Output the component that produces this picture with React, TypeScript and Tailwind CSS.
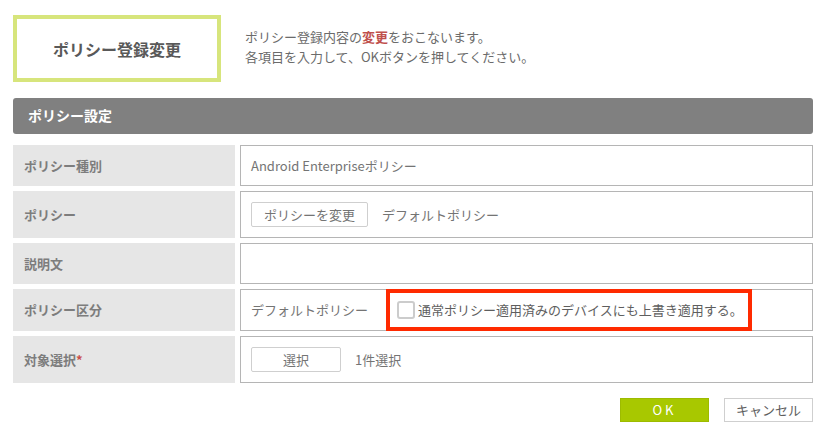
const labelCls =
  'w-[222px] shrink-0 bg-[#e6e6e6] flex items-center pl-[11px] text-[13px] font-bold text-[#7d7d7d]';
const valueCls =
  'flex-1 border border-[#b5b5b5] bg-white flex items-center pl-[10px] text-[13px] text-[#747474]';
const smallBtn =
  'h-[25px] border border-[#cfcfcf] rounded-[2px] bg-white text-[13px] text-[#747474] flex items-center justify-center';

export default function App() {
  return (
    <div className="w-[826px] h-[440px] bg-white px-[13px] pt-[15px] font-['Meiryo','Noto_Sans_CJK_JP',sans-serif]">
      <div className="flex items-center">
        <div className="w-[208px] h-[67px] border-4 border-[#d7e57c] flex items-center justify-center text-[16px] font-bold text-[#595959]">
          ポリシー登録変更
        </div>
        <div className="ml-[24px] mb-[4px] text-[13px] leading-[20px] text-[#6b6b6b]">
          <p>
            ポリシー登録内容の<span className="text-[#c0504d] font-bold">変更</span>をおこないます。
          </p>
          <p>各項目を入力して、OKボタンを押してください。</p>
        </div>
      </div>

      <div className="mt-[16px] h-[36px] bg-[#808080] rounded-[3px] flex items-center pl-[15px] pb-[2px] text-[14px] font-bold text-white">
        ポリシー設定
      </div>

      <div className="mt-[11px] flex flex-col gap-[5px]">
        <div className="flex gap-[5px] h-[41px]">
          <div className={labelCls}>ポリシー種別</div>
          <div className={valueCls}>Android Enterpriseポリシー</div>
        </div>

        <div className="flex gap-[5px] h-[47px]">
          <div className={labelCls}>ポリシー</div>
          <div className={valueCls}>
            <button className={`${smallBtn} w-[117px]`}>ポリシーを変更</button>
            <span className="ml-[14px]">デフォルトポリシー</span>
          </div>
        </div>

        <div className="flex gap-[5px] h-[41px]">
          <div className={labelCls}>説明文</div>
          <div className={valueCls}></div>
        </div>

        <div className="flex gap-[5px] h-[42px]">
          <div className={labelCls}>ポリシー区分</div>
          <div className={`${valueCls} items-stretch`}>
            <span className="flex items-center">デフォルトポリシー</span>
            <label className="ml-[18px] -my-px w-[366px] border-4 border-[#ff2a00] flex items-center pl-[7px] gap-[3px] text-[#5e5e5e]">
              <span className="w-[18px] h-[18px] border-2 border-[#cccccc] rounded-[3px] bg-white" />
              通常ポリシー適用済みのデバイスにも上書き適用する。
            </label>
          </div>
        </div>

        <div className="flex gap-[5px] h-[47px]">
          <div className={labelCls}>
            対象選択<span className="text-[#c9504a]">*</span>
          </div>
          <div className={valueCls}>
            <button className={`${smallBtn} w-[90px]`}>選択</button>
            <span className="ml-[14px]">1件選択</span>
          </div>
        </div>
      </div>

      <div className="mt-[15px] flex justify-end gap-[15px]">
        <button className="w-[89px] h-[24px] bg-[#a8c800] border border-[#9dbb00] text-white text-[13px] tracking-[3px] flex items-center justify-center">
          OK
        </button>
        <button className="w-[89px] h-[24px] bg-white border border-[#cfcfcf] text-[#5e5e5e] text-[13px] flex items-center justify-center">
          キャンセル
        </button>
      </div>
    </div>
  );
}
